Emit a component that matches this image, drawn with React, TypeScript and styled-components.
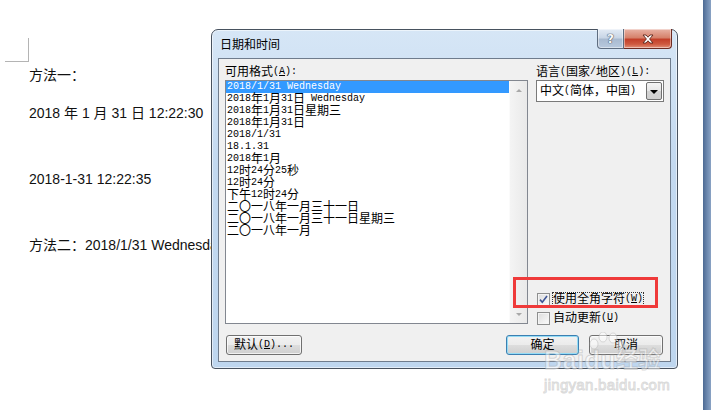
import React from 'react'
import styled, { createGlobalStyle } from 'styled-components'

const GlobalStyle = createGlobalStyle`
  html, body {
    margin: 0;
    padding: 0;
    background: #fff;
  }
  body {
    width: 711px;
    height: 410px;
    overflow: hidden;
  }
`

const HAN = /([\u2e80-\u9fff\uff00-\uffef]+)/

const Han = styled.span`
  position: relative;
  top: -1px;
  font-family: 'Noto Sans CJK SC', sans-serif;
  font-size: 12px;
  line-height: 12px;
  vertical-align: top;
`

const Key = styled.u`
  text-underline-offset: 1px;
`

// SimSun-like mix: half width latin, full width han
const Mixed = ({ text }: { text: string }) => (
  <>
    {text.split(HAN).map((part, i) => (i % 2 === 1 ? <Han key={i}>{part}</Han> : part))}
  </>
)

const Screen = styled.div`
  position: relative;
  display: flex;
  width: 711px;
  height: 410px;
  overflow: hidden;
  background: #fff;
`

const Page = styled.div`
  flex: 1;
  padding: 38px 0 0 5px;
  font-family: 'Liberation Sans', 'Noto Sans CJK SC', sans-serif;
  font-size: 14px;
  color: #111;
`

const CornerMark = styled.div`
  width: 23px;
  height: 23px;
  border-right: 1px solid #b4b4b4;
  border-bottom: 1px solid #b4b4b4;
`

const TextBlock = styled.div`
  margin-left: 24px;
`

const Paragraph = styled.p<{ $gap: number }>`
  margin: ${(p) => p.$gap}px 0 0;
  line-height: 20px;
  white-space: nowrap;
`

const SideBar = styled.div`
  width: 8px;
  background: linear-gradient(to right, #4d6a93, #6f8bb1 55%, #8aa3c4);
`

const Dialog = styled.div`
  position: absolute;
  left: 211px;
  top: 29px;
  width: 467px;
  height: 340px;
  box-sizing: border-box;
  display: flex;
  flex-direction: column;
  padding: 0 6px 6px;
  border: 1px solid #48525f;
  border-radius: 7px 7px 4px 4px;
  background: linear-gradient(to bottom, #d6e6f6 0%, #c3d9f0 40%, #bed6ef 100%);
  box-shadow: inset 0 0 0 1px rgba(255, 255, 255, 0.55);
`

const TitleBar = styled.div`
  display: flex;
  align-items: flex-start;
  height: 28px;
`

const Title = styled.div`
  flex: 1;
  padding: 6px 0 0 2px;
  font-family: 'Noto Sans CJK SC', sans-serif;
  font-size: 12px;
  line-height: 16px;
  color: #000;
`

const CaptionButtons = styled.div`
  display: flex;
  margin: -1px -1px 0 0;
`

const CaptionButton = styled.div<{ $close?: boolean }>`
  display: flex;
  align-items: center;
  justify-content: center;
  width: ${(p) => (p.$close ? 48 : 27)}px;
  height: 20px;
  box-sizing: border-box;
  border: 1px solid ${(p) => (p.$close ? '#6d2b22' : '#5e6d80')};
  border-top: none;
  border-left: ${(p) => (p.$close ? 'none' : '1px solid #5e6d80')};
  border-radius: ${(p) => (p.$close ? '0 0 4px 0' : '0 0 0 4px')};
  background: ${(p) =>
    p.$close
      ? 'linear-gradient(to bottom, #e8b3a6 0%, #d6826c 45%, #c3402a 55%, #cf5a40 80%, #e2917a 100%)'
      : 'linear-gradient(to bottom, #e3ebf5 0%, #c9d6e6 45%, #a9bbd1 55%, #b8c9de 100%)'};
  box-shadow: inset 0 0 0 1px rgba(255, 255, 255, 0.45);
`

const HelpGlyph = styled.span`
  font-family: 'DejaVu Sans', sans-serif;
  font-weight: bold;
  font-size: 12px;
  line-height: 12px;
  color: #f7f9fb;
  text-shadow: 0 0 1px #4d5868, 0 0 1px #4d5868, 0 0 1px #4d5868;
`

const Client = styled.div`
  flex: 1;
  display: flex;
  flex-direction: column;
  padding: 7px 6px 6px;
  border: 1px solid #6f7c8d;
  background: #f0f0f0;
  font-family: 'Liberation Mono', 'Noto Sans CJK SC', monospace;
  font-size: 10px;
  line-height: 12px;
  color: #000;
`

const Panes = styled.div`
  display: grid;
  grid-template-columns: 303px 128px;
  column-gap: 8px;
`

const Pane = styled.div`
  display: flex;
  flex-direction: column;
`

const Label = styled.div`
  height: 12px;
  margin-bottom: 2px;
  white-space: nowrap;
`

const ListBox = styled.div`
  display: flex;
  height: 244px;
  box-sizing: border-box;
  border: 1px solid #828790;
  background: #fff;
`

const Items = styled.div`
  flex: 1;
`

const Item = styled.div<{ $selected?: boolean }>`
  height: 12px;
  padding-left: 1px;
  white-space: pre;
  background: ${(p) => (p.$selected ? '#3399ff' : 'transparent')};
  color: ${(p) => (p.$selected ? '#fff' : '#000')};
`

const ScrollBar = styled.div`
  display: flex;
  flex-direction: column;
  justify-content: space-between;
  align-items: center;
  width: 18px;
  padding: 8px 0 7px;
  box-sizing: border-box;
  border-left: 1px solid #fbfbfb;
  background: linear-gradient(to right, #f4f4f4, #e9e9e9);
`

const Arrow = styled.div<{ $down?: boolean }>`
  width: 0;
  height: 0;
  border-left: 3px solid transparent;
  border-right: 3px solid transparent;
  ${(p) => (p.$down ? 'border-top: 3px solid #a8a8a8;' : 'border-bottom: 3px solid #a8a8a8;')}
`

const Combo = styled.div`
  display: flex;
  align-items: center;
  height: 22px;
  box-sizing: border-box;
  padding: 0 1px 0 3px;
  border: 1px solid #7a7a7a;
  background: #fff;
  white-space: nowrap;
`

const ComboText = styled.div`
  flex: 1;
`

const DropButton = styled.div`
  display: flex;
  align-items: center;
  justify-content: center;
  width: 16px;
  height: 18px;
  box-sizing: border-box;
  border: 1px solid #707070;
  border-radius: 2px;
  background: linear-gradient(to bottom, #f4f4f4 0%, #e6e6e6 50%, #d3d3d3 51%, #cfcfcf 100%);
`

const DropArrow = styled.div`
  width: 0;
  height: 0;
  margin-top: 1px;
  border-left: 4px solid transparent;
  border-right: 4px solid transparent;
  border-top: 4px solid #000;
`

const Checks = styled.div`
  display: flex;
  flex-direction: column;
  gap: 3px;
  margin: auto 0 -2px 1px;
`

const CheckRow = styled.div`
  display: flex;
  align-items: center;
  gap: 2px;
  height: 16px;
  white-space: nowrap;
`

const Box = styled.div`
  display: flex;
  align-items: center;
  justify-content: center;
  width: 13px;
  height: 13px;
  box-sizing: border-box;
  border: 1px solid #8e8f8f;
  background: linear-gradient(135deg, #dcdcdc, #fbfbfb);
  box-shadow: inset 0 0 0 1px #f4f4f4;
`

const CheckText = styled.div<{ $focused?: boolean }>`
  padding: 1px;
  outline: ${(p) => (p.$focused ? '1px dotted #333' : 'none')};
  outline-offset: -1px;
`

const Footer = styled.div`
  display: flex;
  align-items: center;
  margin-top: 11px;
  padding: 0 1px;
`

const Spacer = styled.div`
  flex: 1;
`

const Button = styled.div<{ $width: number; $default?: boolean }>`
  display: flex;
  align-items: center;
  justify-content: center;
  width: ${(p) => p.$width}px;
  height: 20px;
  box-sizing: border-box;
  border: 1px solid ${(p) => (p.$default ? '#3c7fb1' : '#707070')};
  border-radius: 3px;
  background: linear-gradient(to bottom, #f2f2f2 0%, #ebebeb 50%, #dddddd 51%, #cfcfcf 100%);
  box-shadow: inset 0 0 0 1px ${(p) => (p.$default ? '#94dcf6' : 'rgba(255,255,255,0.7)')};
  white-space: nowrap;
  & + & {
    margin-left: 10px;
  }
`

const Annotation = styled.div`
  position: absolute;
  left: 513px;
  top: 277px;
  width: 145px;
  height: 31px;
  box-sizing: border-box;
  border: 3px solid #ef3a3a;
`

const Watermark = styled.div`
  position: absolute;
  left: 544px;
  top: 346px;
  display: flex;
  flex-direction: column;
  align-items: flex-start;
  font-family: 'Liberation Sans', 'Noto Sans CJK SC', sans-serif;
  color: rgba(255, 255, 255, 0.5);
  -webkit-text-stroke: 1px rgba(160, 160, 160, 0.4);
  pointer-events: none;
`

const Brand = styled.div`
  display: flex;
  align-items: flex-end;
  font-size: 25px;
  font-weight: bold;
  line-height: 28px;
  letter-spacing: 0.5px;
`

const BrandHan = styled.span`
  font-size: 22px;
`

const Site = styled.div`
  margin-top: 3px;
  font-size: 15px;
  line-height: 16px;
  letter-spacing: 0.3px;
`

const Paw = styled.svg`
  position: absolute;
  left: 42px;
  top: -14px;
`

const formats = [
  '2018/1/31 Wednesday',
  '2018年1月31日 Wednesday',
  '2018年1月31日星期三',
  '2018年1月31日',
  '2018/1/31',
  '18.1.31',
  '2018年1月',
  '12时24分25秒',
  '12时24分',
  '下午12时24分',
  '二〇一八年一月三十一日',
  '二〇一八年一月三十一日星期三',
  '二〇一八年一月',
]

export default function App() {
  return (
    <Screen>
      <GlobalStyle />
      <Page>
        <CornerMark />
        <TextBlock>
          <Paragraph $gap={3}>方法一：</Paragraph>
          <Paragraph $gap={18}>2018 年 1 月 31 日 12:22:30</Paragraph>
          <Paragraph $gap={46}>2018-1-31 12:22:35</Paragraph>
          <Paragraph $gap={46}>方法二：2018/1/31 Wednesday</Paragraph>
        </TextBlock>
      </Page>
      <SideBar />

      <Dialog>
        <TitleBar>
          <Title>日期和时间</Title>
          <CaptionButtons>
            <CaptionButton>
              <HelpGlyph>?</HelpGlyph>
            </CaptionButton>
            <CaptionButton $close>
              <svg width="12" height="10" viewBox="0 0 12 10">
                <path
                  d="M1 1h3l2 2.2L8 1h3L7.6 5 11 9H8L6 6.8 4 9H1l3.4-4z"
                  fill="#fff"
                  stroke="#5b241a"
                  strokeWidth="0.9"
                  strokeLinejoin="round"
                />
              </svg>
            </CaptionButton>
          </CaptionButtons>
        </TitleBar>

        <Client>
          <Panes>
            <Pane>
              <Label>
                <Mixed text="可用格式" />(<Key>A</Key>):
              </Label>
              <ListBox>
                <Items>
                  {formats.map((f, i) => (
                    <Item key={f} $selected={i === 0}>
                      <Mixed text={f} />
                    </Item>
                  ))}
                </Items>
                <ScrollBar>
                  <Arrow />
                  <Arrow $down />
                </ScrollBar>
              </ListBox>
            </Pane>

            <Pane>
              <Label>
                <Mixed text="语言(国家/地区)" />(<Key>L</Key>):
              </Label>
              <Combo>
                <ComboText>
                  <Mixed text="中文(简体，中国)" />
                </ComboText>
                <DropButton>
                  <DropArrow />
                </DropButton>
              </Combo>
              <Checks>
                <CheckRow>
                  <Box>
                    <svg width="9" height="9" viewBox="0 0 9 9">
                      <path d="M1 4.6l2.3 2.6L8 1" fill="none" stroke="#3f5596" strokeWidth="1.6" />
                    </svg>
                  </Box>
                  <CheckText $focused>
                    <Mixed text="使用全角字符" />(<Key>W</Key>)
                  </CheckText>
                </CheckRow>
                <CheckRow>
                  <Box />
                  <CheckText>
                    <Mixed text="自动更新" />(<Key>U</Key>)
                  </CheckText>
                </CheckRow>
              </Checks>
            </Pane>
          </Panes>

          <Footer>
            <Button $width={76}>
              <Mixed text="默认" />(<Key>D</Key>)...
            </Button>
            <Spacer />
            <Button $width={73} $default>
              <Han>确定</Han>
            </Button>
            <Button $width={74}>
              <Han>取消</Han>
            </Button>
          </Footer>
        </Client>
      </Dialog>

      <Annotation />

      <Watermark>
        <Paw width="40" height="30" viewBox="0 0 40 30">
          <g fill="rgba(255,255,255,0.5)" stroke="rgba(170,170,170,0.4)" strokeWidth="1">
            <ellipse cx="8" cy="12" rx="4" ry="5" />
            <ellipse cx="17" cy="5" rx="4" ry="5" />
            <ellipse cx="27" cy="6" rx="4" ry="5" />
            <ellipse cx="34" cy="14" rx="4" ry="5" />
          </g>
        </Paw>
        <Brand>
          Baidu<BrandHan>经验</BrandHan>
        </Brand>
        <Site>jingyan.baidu.com</Site>
      </Watermark>
    </Screen>
  )
}
